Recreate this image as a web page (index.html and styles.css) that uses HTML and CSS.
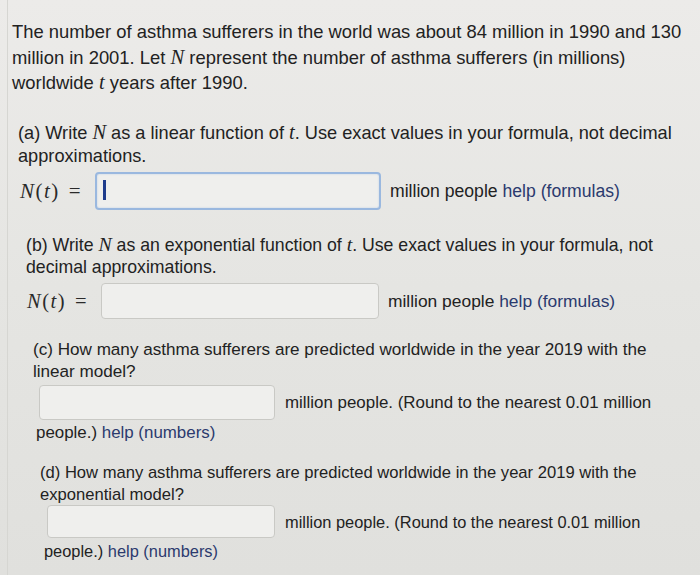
FILE: index.html
```html
<!DOCTYPE html>
<html>
<head>
<meta charset="utf-8">
<link rel="stylesheet" href="styles.css">
</head>
<body>
<div class="page">
  <div class="intro">
    <div class="line">The number of asthma sufferers in the world was about 84 million in 1990 and 130</div>
    <div class="line">million in 2001. Let <i class="m">N</i> represent the number of asthma sufferers (in millions)</div>
    <div class="line">worldwide <i class="m">t</i> years after 1990.</div>
  </div>

  <div class="part part-a">
    <div class="line">(a) Write <i class="m">N</i> as a linear function of <i class="m">t</i>. Use exact values in your formula, not decimal</div>
    <div class="line">approximations.</div>
    <div class="row">
      <span class="eq"><i>N</i>(<i>t</i>)<span class="eqs">=</span></span>
      <span class="box focus"><span class="caret"></span></span>
      <span class="after">million people <span class="link">help (formulas)</span></span>
    </div>
  </div>

  <div class="part part-b">
    <div class="line">(b) Write <i class="m">N</i> as an exponential function of <i class="m">t</i>. Use exact values in your formula, not</div>
    <div class="line">decimal approximations.</div>
    <div class="row">
      <span class="eq"><i>N</i>(<i>t</i>)<span class="eqs">=</span></span>
      <span class="box"></span>
      <span class="after">million people <span class="link">help (formulas)</span></span>
    </div>
  </div>

  <div class="part part-c">
    <div class="line">(c) How many asthma sufferers are predicted worldwide in the year 2019 with the</div>
    <div class="line">linear model?</div>
    <div class="row">
      <span class="box"></span>
      <span class="after">million people. (Round to the nearest 0.01 million</span>
    </div>
    <div class="line tail">people.) <span class="link">help (numbers)</span></div>
  </div>

  <div class="part part-d">
    <div class="line">(d) How many asthma sufferers are predicted worldwide in the year 2019 with the</div>
    <div class="line">exponential model?</div>
    <div class="row">
      <span class="box"></span>
      <span class="after">million people. (Round to the nearest 0.01 million</span>
    </div>
    <div class="line tail">people.) <span class="link">help (numbers)</span></div>
  </div>
</div>
</body>
</html>
```
FILE: styles.css
```css
html, body {
  margin: 0;
  padding: 0;
}
body {
  width: 700px;
  height: 575px;
  overflow: hidden;
  background: linear-gradient(180deg, #ecebe9 0%, #e5e5e2 50%, #e0e0dd 100%);
  font-family: "Liberation Sans", Arial, sans-serif;
  color: #222222;
}
.page {
  height: 575px;
  margin-left: 7px;
  border-left: 1px solid #d6d6d2;
  padding-top: 19px;
  box-sizing: border-box;
}
.line {
  white-space: nowrap;
}
.m {
  font-family: "Liberation Serif", "Times New Roman", serif;
  font-style: italic;
  font-size: 1.12em;
}
.intro {
  font-size: 18.4px;
  line-height: 25.5px;
  padding-left: 4px;
}

.row {
  display: flex;
  align-items: center;
}
.eq {
  font-family: "Liberation Serif", "Times New Roman", serif;
  font-size: 21px;
  letter-spacing: 1.5px;
  white-space: nowrap;
  color: #2a2a2a;
}
.eq i { font-style: italic; }
.eqs { margin-left: 9px; }
.box {
  display: block;
  box-sizing: border-box;
  background: #efefed;
  border: 1px solid #c9c9c5;
  border-radius: 4px;
  position: relative;
}
.focus {
  border: 2px solid #9ab8df;
  box-shadow: inset 0 0 2px #b9cfe9;
}
.caret {
  position: absolute;
  left: 6px;
  top: 6px;
  width: 3px;
  height: 20px;
  background: #1f3c8c;
}
.after {
  white-space: nowrap;
}
.link {
  color: #2b3a6e;
}

/* (a) */
.part-a {
  margin-top: 25px;
  padding-left: 10px;
  font-size: 18.2px;
  line-height: 23px;
}
.part-a .row { margin-top: 4.5px; }
.part-a .eq { width: 75px; margin-left: 2px; }
.part-a .box { width: 286px; height: 38px; margin-right: 9px; }
.part-a .after { font-size: 17.6px; }

/* (b) */
.part-b {
  margin-top: 23px;
  padding-left: 18px;
  font-size: 17.7px;
  line-height: 22px;
}
.part-b .row { margin-top: 5px; }
.part-b .eq { width: 74px; margin-left: 1px; font-size: 20.5px; }
.part-b .box { width: 278px; height: 36px; margin-right: 9px; }
.part-b .after { font-size: 17.4px; }

/* (c) */
.part-c {
  margin-top: 20px;
  padding-left: 25px;
  font-size: 17.1px;
  line-height: 22px;
}
.part-c .row { margin-top: 2px; }
.part-c .box { width: 236px; height: 35px; margin-left: 6px; margin-right: 10px; }
.part-c .after { font-size: 16.9px; }
.part-c .tail { margin-top: 2px; padding-left: 3px; font-size: 16.9px; }

/* (d) */
.part-d {
  margin-top: 18px;
  padding-left: 32px;
  font-size: 16.6px;
  line-height: 22px;
}
.part-d .row { margin-top: -1px; }
.part-d .box { width: 228px; height: 33px; margin-left: 7px; margin-right: 10px; }
.part-d .after { font-size: 16.4px; }
.part-d .tail { margin-top: 2px; padding-left: 4px; font-size: 16.4px; }
```
